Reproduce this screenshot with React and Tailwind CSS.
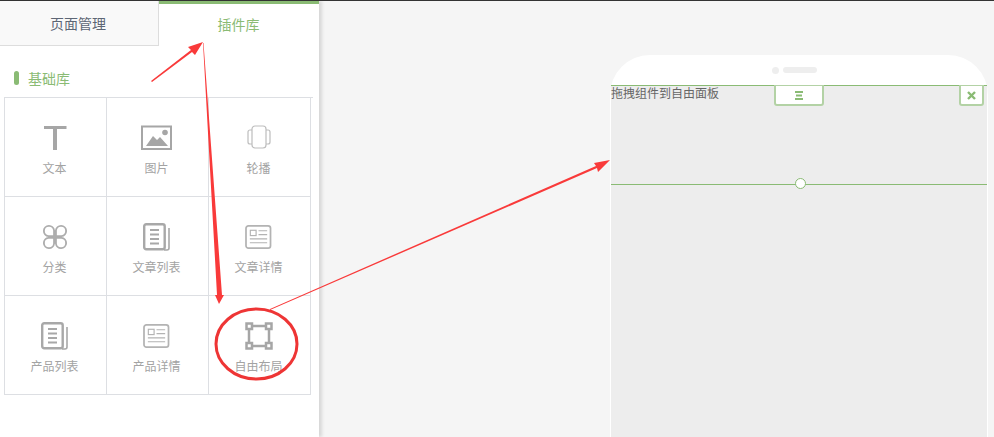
import React from "react";

const gray = "#a6a6a6";

const TextIcon = () => (
  <svg width="24" height="26" viewBox="0 0 24 26"><path d="M1 1h22.500v3H14v21h-4V4H1z" fill={gray} /></svg>
);
const ImageIcon = () => (
  <svg width="31" height="26" viewBox="0 0 31 26">
    <rect x="1" y="1.500" width="29" height="22.500" fill="none" stroke={gray} strokeWidth="2" />
    <path d="M5 21l7-10 4 4 3-3 8 9z" fill={gray} />
    <circle cx="24" cy="7.500" r="2.800" fill={gray} />
  </svg>
);
const SwiperIcon = () => (
  <svg width="26" height="26" viewBox="0 0 26 26" fill="none" stroke="#bdbdbd" strokeWidth="1.200">
    <rect x="6" y="1" width="14" height="22" rx="3" />
    <path d="M6 5H4a2 2 0 0 0-2 2v10a2 2 0 0 0 2 2h2M20 5h2a2 2 0 0 1 2 2v10a2 2 0 0 1-2 2h-2" />
  </svg>
);
const CategoryIcon = () => (
  <svg width="26" height="26" viewBox="0 0 28 28" fill="none" stroke="#adadad" strokeWidth="2">
    <path d="M13 13H7a5.500 5.500 0 1 1 6-6zM15 13V7a5.500 5.500 0 1 1 6 6zM13 15v6a5.500 5.500 0 1 1-6-6zM15 15h6a5.500 5.500 0 1 1-6 6z" />
  </svg>
);
const ListIcon = () => (
  <svg width="28" height="28" viewBox="0 0 28 28" fill="none" stroke="#a8a8a8">
    <rect x="1.200" y="1.200" width="20.500" height="25" rx="2" strokeWidth="2.400" />
    <path d="M7 7h9M7 11.500h9M7 16h9M7 20.500h9" strokeWidth="1.800" />
    <path d="M26 5v20a2 2 0 0 1-2 2h-3" strokeWidth="1.600" />
  </svg>
);
const DetailIcon = () => (
  <svg width="27" height="25" viewBox="0 0 28 26" fill="none" stroke="#b3b3b3">
    <rect x="1" y="1" width="25.500" height="23" rx="2.500" strokeWidth="1.800" />
    <rect x="5.500" y="5.500" width="6" height="5.500" strokeWidth="1.200" />
    <path d="M14 6h9M14 10h9M5 14.500h18M5 18.500h18" strokeWidth="1.200" />
  </svg>
);
const FreeIcon = () => (
  <svg width="28" height="28" viewBox="0 0 28 28" fill="none" stroke={gray} strokeWidth="2.500">
    <path d="M4 7v14M7 4h14M7 24h14M24 7v14" />
    <rect x="1.500" y="1.500" width="5.500" height="5.500" />
    <rect x="21" y="1.500" width="5.500" height="5.500" />
    <rect x="1.500" y="21" width="5.500" height="5.500" />
    <rect x="21" y="21" width="5.500" height="5.500" />
  </svg>
);

const items = [
  ["文本", <TextIcon />],
  ["图片", <ImageIcon />],
  ["轮播", <SwiperIcon />],
  ["分类", <CategoryIcon />],
  ["文章列表", <ListIcon />],
  ["文章详情", <DetailIcon />],
  ["产品列表", <ListIcon />],
  ["产品详情", <DetailIcon />],
  ["自由布局", <FreeIcon />],
];

export default function App() {
  return (
    <div
      className="relative w-[994px] h-[437px] overflow-hidden bg-[#f5f5f5] border-t border-[#333333] flex"
      style={{ fontFamily: '"Noto Sans CJK SC", "Liberation Sans", sans-serif' }}
    >
      <aside className="w-[319px] h-full bg-white shadow-[3px_0_3px_#d8d8d8] shrink-0">
        <div className="flex h-[45px]">
          <div className="w-[159px] bg-[#f9f9f9] border-b border-r border-[#dddddd] flex items-center justify-center text-[14px] text-[#5d6675] pr-[2px] pt-[1px]">
            页面管理
          </div>
          <div className="flex-1 border-t-[3px] border-[#8abb74] flex items-center justify-center text-[14px] text-[#8abb74] pr-[1px] pb-[2px]">
            插件库
          </div>
        </div>
        <div className="flex items-center h-[51px] pl-[14px] pt-[15px] pb-[2px]">
          <span className="w-[5px] h-[14px] rounded-[3px] bg-[#8abb74]" />
          <span className="ml-[9px] text-[14px] leading-5 text-[#8abb74]">基础库</span>
        </div>
        <div className="ml-[4px] w-[309px] border-t border-[#dddfe3]">
          <div className="w-[307px] grid grid-cols-[102px_102px_102px] border-l border-[#dddfe3]">
            {items.map(([label, icon]) => (
              <div
                key={label}
                className="h-[99px] border-r border-b border-[#dddfe3] flex flex-col items-center pt-[26px] pr-[2px]"
              >
                <div className="h-[28px] flex items-center justify-center">{icon}</div>
                <div className="mt-[7px] text-[12px] leading-[18px] text-[#a3a3a3]">{label}</div>
              </div>
            ))}
          </div>
        </div>
      </aside>

      <main className="flex-1 pl-[291px] pt-[54px]">
        <div className="w-[378px] h-[400px] bg-white rounded-t-[40px] flex flex-col">
          <div className="h-[30px] flex items-center justify-center gap-[4px] pr-[10px]">
            <span className="w-[7px] h-[7px] rounded-full bg-[#eeeeee]" />
            <span className="w-[34px] h-[6px] rounded-full bg-[#eeeeee]" />
          </div>
          <div className="relative flex-1 mx-[1px] bg-[#ededed] border-t border-[#8abb74] text-[12px] leading-[14px] text-[#666666]">
            <div>拖拽组件到自由面板</div>
            <div className="absolute -top-px left-[163px] w-[50px] h-[21px] bg-white border-2 border-t border-[#b3d2a5] rounded-b-[3px] flex items-center justify-center">
              <svg width="8" height="9" viewBox="0 0 8 9"><path d="M0 1h8M1 4.500h6M0 8h8" stroke="#8abb74" strokeWidth="1.800" /></svg>
            </div>
            <div className="absolute -top-px left-[348px] w-[25px] h-[21px] bg-white border-2 border-t border-[#b3d2a5] rounded-b-[3px] flex items-center justify-center">
              <svg width="9" height="9" viewBox="0 0 9 9"><path d="M1 1l7 7M8 1l-7 7" stroke="#8abb74" strokeWidth="2.400" /></svg>
            </div>
            <div className="absolute left-0 right-0 top-[98px] h-px bg-[#8abb74]" />
            <div className="absolute left-[184px] top-[92px] w-[11px] h-[11px] rounded-full bg-white border border-[#8abb74]" />
          </div>
        </div>
      </main>

      <svg className="absolute left-0 -top-px pointer-events-none" width="994" height="437" viewBox="0 0 994 437">
        <polygon points="151,81 191,50 188,47 203,42 195,55 192,52 152,82" fill="#f93a3a" />
        <polygon points="203,43 203.500,43 222,295 224,295 219,304 215,295 217,295" fill="#f93a3a" />
        <polygon points="270,309 596,166 594,163 610,160 598,172 597,168 270,310" fill="#f93a3a" />
        <ellipse cx="256.500" cy="344" rx="40.500" ry="35" fill="none" stroke="#ee3535" strokeWidth="3" />
      </svg>
    </div>
  );
}
